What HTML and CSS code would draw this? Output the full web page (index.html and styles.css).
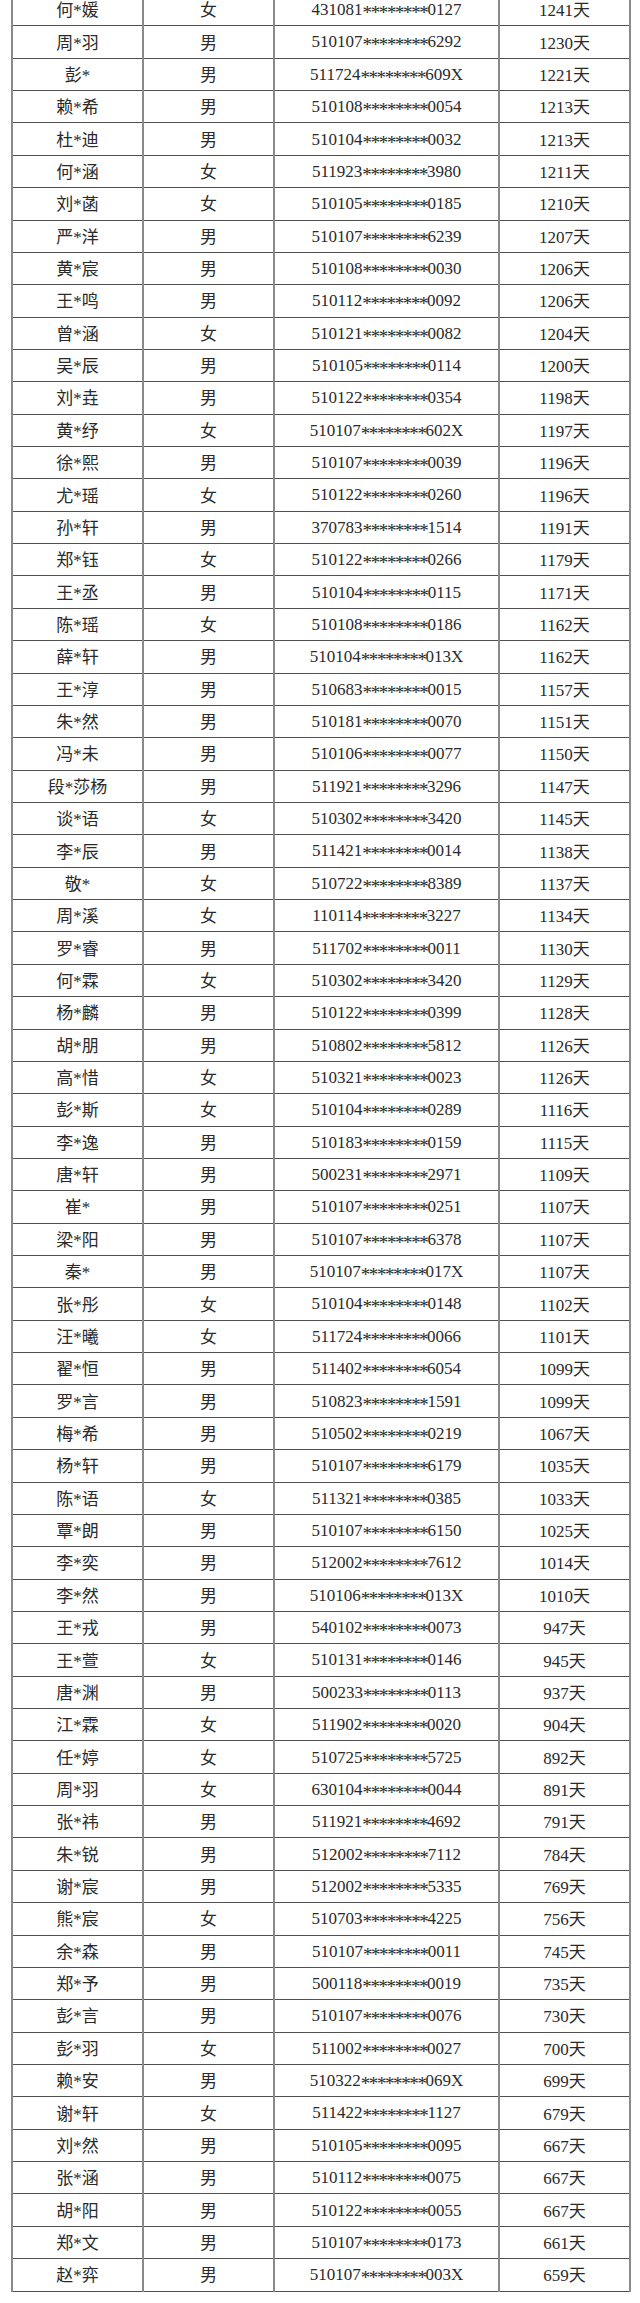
FILE: index.html
```html
<!DOCTYPE html>
<html lang="zh-CN">
<head>
<meta charset="utf-8">
<title>名单</title>
<link rel="stylesheet" href="styles.css">
</head>
<body>
<table class="roster">
<colgroup><col class="c-name"><col class="c-sex"><col class="c-id"><col class="c-days"></colgroup>
<tbody>
<tr><td>何*媛</td><td>女</td><td>431081<span class="mask">********</span>0127</td><td>1241天</td></tr>
<tr><td>周*羽</td><td>男</td><td>510107<span class="mask">********</span>6292</td><td>1230天</td></tr>
<tr><td>彭*</td><td>男</td><td>511724<span class="mask">********</span>609X</td><td>1221天</td></tr>
<tr><td>赖*希</td><td>男</td><td>510108<span class="mask">********</span>0054</td><td>1213天</td></tr>
<tr><td>杜*迪</td><td>男</td><td>510104<span class="mask">********</span>0032</td><td>1213天</td></tr>
<tr><td>何*涵</td><td>女</td><td>511923<span class="mask">********</span>3980</td><td>1211天</td></tr>
<tr><td>刘*菡</td><td>女</td><td>510105<span class="mask">********</span>0185</td><td>1210天</td></tr>
<tr><td>严*洋</td><td>男</td><td>510107<span class="mask">********</span>6239</td><td>1207天</td></tr>
<tr><td>黄*宸</td><td>男</td><td>510108<span class="mask">********</span>0030</td><td>1206天</td></tr>
<tr><td>王*鸣</td><td>男</td><td>510112<span class="mask">********</span>0092</td><td>1206天</td></tr>
<tr><td>曾*涵</td><td>女</td><td>510121<span class="mask">********</span>0082</td><td>1204天</td></tr>
<tr><td>吴*辰</td><td>男</td><td>510105<span class="mask">********</span>0114</td><td>1200天</td></tr>
<tr><td>刘*垚</td><td>男</td><td>510122<span class="mask">********</span>0354</td><td>1198天</td></tr>
<tr><td>黄*纾</td><td>女</td><td>510107<span class="mask">********</span>602X</td><td>1197天</td></tr>
<tr><td>徐*熙</td><td>男</td><td>510107<span class="mask">********</span>0039</td><td>1196天</td></tr>
<tr><td>尤*瑶</td><td>女</td><td>510122<span class="mask">********</span>0260</td><td>1196天</td></tr>
<tr><td>孙*轩</td><td>男</td><td>370783<span class="mask">********</span>1514</td><td>1191天</td></tr>
<tr><td>郑*钰</td><td>女</td><td>510122<span class="mask">********</span>0266</td><td>1179天</td></tr>
<tr><td>王*丞</td><td>男</td><td>510104<span class="mask">********</span>0115</td><td>1171天</td></tr>
<tr><td>陈*瑶</td><td>女</td><td>510108<span class="mask">********</span>0186</td><td>1162天</td></tr>
<tr><td>薛*轩</td><td>男</td><td>510104<span class="mask">********</span>013X</td><td>1162天</td></tr>
<tr><td>王*淳</td><td>男</td><td>510683<span class="mask">********</span>0015</td><td>1157天</td></tr>
<tr><td>朱*然</td><td>男</td><td>510181<span class="mask">********</span>0070</td><td>1151天</td></tr>
<tr><td>冯*未</td><td>男</td><td>510106<span class="mask">********</span>0077</td><td>1150天</td></tr>
<tr><td>段*莎杨</td><td>男</td><td>511921<span class="mask">********</span>3296</td><td>1147天</td></tr>
<tr><td>谈*语</td><td>女</td><td>510302<span class="mask">********</span>3420</td><td>1145天</td></tr>
<tr><td>李*辰</td><td>男</td><td>511421<span class="mask">********</span>0014</td><td>1138天</td></tr>
<tr><td>敬*</td><td>女</td><td>510722<span class="mask">********</span>8389</td><td>1137天</td></tr>
<tr><td>周*溪</td><td>女</td><td>110114<span class="mask">********</span>3227</td><td>1134天</td></tr>
<tr><td>罗*睿</td><td>男</td><td>511702<span class="mask">********</span>0011</td><td>1130天</td></tr>
<tr><td>何*霖</td><td>女</td><td>510302<span class="mask">********</span>3420</td><td>1129天</td></tr>
<tr><td>杨*麟</td><td>男</td><td>510122<span class="mask">********</span>0399</td><td>1128天</td></tr>
<tr><td>胡*朋</td><td>男</td><td>510802<span class="mask">********</span>5812</td><td>1126天</td></tr>
<tr><td>高*惜</td><td>女</td><td>510321<span class="mask">********</span>0023</td><td>1126天</td></tr>
<tr><td>彭*斯</td><td>女</td><td>510104<span class="mask">********</span>0289</td><td>1116天</td></tr>
<tr><td>李*逸</td><td>男</td><td>510183<span class="mask">********</span>0159</td><td>1115天</td></tr>
<tr><td>唐*轩</td><td>男</td><td>500231<span class="mask">********</span>2971</td><td>1109天</td></tr>
<tr><td>崔*</td><td>男</td><td>510107<span class="mask">********</span>0251</td><td>1107天</td></tr>
<tr><td>梁*阳</td><td>男</td><td>510107<span class="mask">********</span>6378</td><td>1107天</td></tr>
<tr><td>秦*</td><td>男</td><td>510107<span class="mask">********</span>017X</td><td>1107天</td></tr>
<tr><td>张*彤</td><td>女</td><td>510104<span class="mask">********</span>0148</td><td>1102天</td></tr>
<tr><td>汪*曦</td><td>女</td><td>511724<span class="mask">********</span>0066</td><td>1101天</td></tr>
<tr><td>翟*恒</td><td>男</td><td>511402<span class="mask">********</span>6054</td><td>1099天</td></tr>
<tr><td>罗*言</td><td>男</td><td>510823<span class="mask">********</span>1591</td><td>1099天</td></tr>
<tr><td>梅*希</td><td>男</td><td>510502<span class="mask">********</span>0219</td><td>1067天</td></tr>
<tr><td>杨*轩</td><td>男</td><td>510107<span class="mask">********</span>6179</td><td>1035天</td></tr>
<tr><td>陈*语</td><td>女</td><td>511321<span class="mask">********</span>0385</td><td>1033天</td></tr>
<tr><td>覃*朗</td><td>男</td><td>510107<span class="mask">********</span>6150</td><td>1025天</td></tr>
<tr><td>李*奕</td><td>男</td><td>512002<span class="mask">********</span>7612</td><td>1014天</td></tr>
<tr><td>李*然</td><td>男</td><td>510106<span class="mask">********</span>013X</td><td>1010天</td></tr>
<tr><td>王*戎</td><td>男</td><td>540102<span class="mask">********</span>0073</td><td>947天</td></tr>
<tr><td>王*萱</td><td>女</td><td>510131<span class="mask">********</span>0146</td><td>945天</td></tr>
<tr><td>唐*渊</td><td>男</td><td>500233<span class="mask">********</span>0113</td><td>937天</td></tr>
<tr><td>江*霖</td><td>女</td><td>511902<span class="mask">********</span>0020</td><td>904天</td></tr>
<tr><td>任*婷</td><td>女</td><td>510725<span class="mask">********</span>5725</td><td>892天</td></tr>
<tr><td>周*羽</td><td>女</td><td>630104<span class="mask">********</span>0044</td><td>891天</td></tr>
<tr><td>张*祎</td><td>男</td><td>511921<span class="mask">********</span>4692</td><td>791天</td></tr>
<tr><td>朱*锐</td><td>男</td><td>512002<span class="mask">********</span>7112</td><td>784天</td></tr>
<tr><td>谢*宸</td><td>男</td><td>512002<span class="mask">********</span>5335</td><td>769天</td></tr>
<tr><td>熊*宸</td><td>女</td><td>510703<span class="mask">********</span>4225</td><td>756天</td></tr>
<tr><td>余*森</td><td>男</td><td>510107<span class="mask">********</span>0011</td><td>745天</td></tr>
<tr><td>郑*予</td><td>男</td><td>500118<span class="mask">********</span>0019</td><td>735天</td></tr>
<tr><td>彭*言</td><td>男</td><td>510107<span class="mask">********</span>0076</td><td>730天</td></tr>
<tr><td>彭*羽</td><td>女</td><td>511002<span class="mask">********</span>0027</td><td>700天</td></tr>
<tr><td>赖*安</td><td>男</td><td>510322<span class="mask">********</span>069X</td><td>699天</td></tr>
<tr><td>谢*轩</td><td>女</td><td>511422<span class="mask">********</span>1127</td><td>679天</td></tr>
<tr><td>刘*然</td><td>男</td><td>510105<span class="mask">********</span>0095</td><td>667天</td></tr>
<tr><td>张*涵</td><td>男</td><td>510112<span class="mask">********</span>0075</td><td>667天</td></tr>
<tr><td>胡*阳</td><td>男</td><td>510122<span class="mask">********</span>0055</td><td>667天</td></tr>
<tr><td>郑*文</td><td>男</td><td>510107<span class="mask">********</span>0173</td><td>661天</td></tr>
<tr><td>赵*弈</td><td>男</td><td>510107<span class="mask">********</span>003X</td><td>659天</td></tr>
</tbody>
</table>
</body>
</html>
```

FILE: styles.css
```css
html, body {
  margin: 0;
  padding: 0;
  background: #ffffff;
}

body {
  padding-left: 11px;
  overflow: hidden;
}

.roster {
  border-collapse: collapse;
  table-layout: fixed;
  width: 619px;
  margin-top: -7px;
  font-family: "Liberation Serif", "Noto Sans CJK SC", serif;
  font-size: 17px;
  color: #2a2a2a;
}

.c-name { width: 131px; }
.c-sex { width: 131px; }
.c-id { width: 225px; }
.c-days { width: 131px; }

.roster tr {
  height: 32.36px;
}

.roster td {
  padding: 3px 0 0 0;
  text-align: center;
  vertical-align: middle;
  line-height: 20px;
  white-space: nowrap;
  border-top: 1px solid #505050;
  border-bottom: 1px solid #505050;
  border-left: 2px solid #8a8a8a;
  border-right: 2px solid #8a8a8a;
}

.mask {
  font-size: 19px;
  letter-spacing: -1.4px;
  vertical-align: -0.22em;
  line-height: 1;
}
```
